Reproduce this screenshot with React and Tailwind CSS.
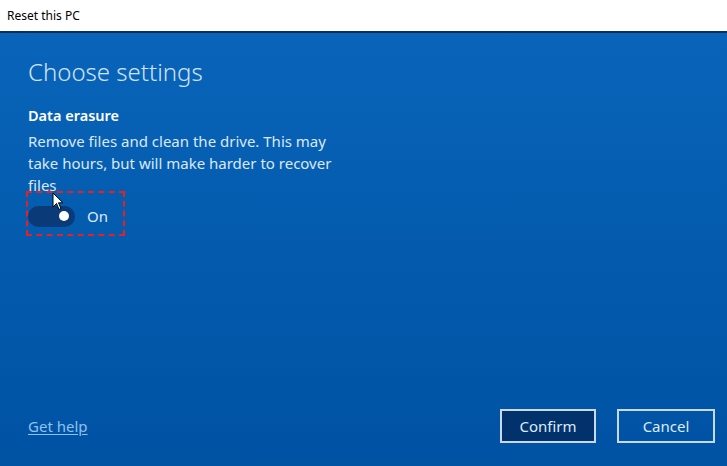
export default function App() {
  return (
    <div
      className="flex h-[466px] w-[727px] flex-col overflow-hidden"
      style={{ fontFamily: '"Noto Sans", "Open Sans", sans-serif' }}
    >
      <div className="flex h-[31px] items-center bg-white px-[7px] text-[12px] text-black">
        Reset this PC
      </div>
      <div className="h-[2px] bg-[#0b2f5c]" />

      <div className="relative flex flex-1 flex-col bg-gradient-to-b from-[#0964b9] to-[#0052a3] pb-[23px] pl-[28px] pr-[12px] text-[#dbe9f6]">
        <h1 className="mt-[22px] text-[24px] font-light leading-[34px] text-[#cfe4f8]">Choose settings</h1>

        <p className="mt-[16px] text-[14.5px] font-semibold leading-[20px] text-white">Data erasure</p>
        <p className="mt-[5px] w-[330px] text-[15px] leading-[22px]">
          Remove files and clean the drive. This may take hours, but will make harder to recover files
        </p>

        <div className="relative mt-[9px] flex items-center gap-[12px]">
          <div className="flex h-[21px] w-[47px] items-center justify-end rounded-full bg-[#0a3a78] pr-[6px]">
            <div className="h-[10px] w-[10px] rounded-full bg-white" />
          </div>
          <span className="text-[15px]">On</span>
          <div className="pointer-events-none absolute left-[-2px] top-[-14px] h-[45px] w-[99px] border-[2px] border-dashed border-[#e8201f]" />
          <svg className="absolute left-[24px] top-[-13px]" width="12" height="19" viewBox="0 0 12 19">
            <path d="M1 1 L1 15 L4.5 11.5 L7 17.5 L9 16.5 L6.5 10.8 L11 10.8 Z" fill="white" stroke="black" strokeWidth="1" />
          </svg>
        </div>

        <div className="mt-auto flex items-center">
          <a className="text-[15px] text-[#8fc2ee] underline underline-offset-2">Get help</a>
          <div className="ml-auto flex gap-[21px]">
            <button className="h-[34px] w-[96px] border-[2px] border-[#c9d9ea] bg-[#01326b] text-[15px] text-[#dfeaf6]">
              Confirm
            </button>
            <button className="h-[34px] w-[98px] border-[2px] border-[#c9d9ea] text-[15px] text-[#dfeaf6]">
              Cancel
            </button>
          </div>
        </div>
      </div>
    </div>
  );
}
